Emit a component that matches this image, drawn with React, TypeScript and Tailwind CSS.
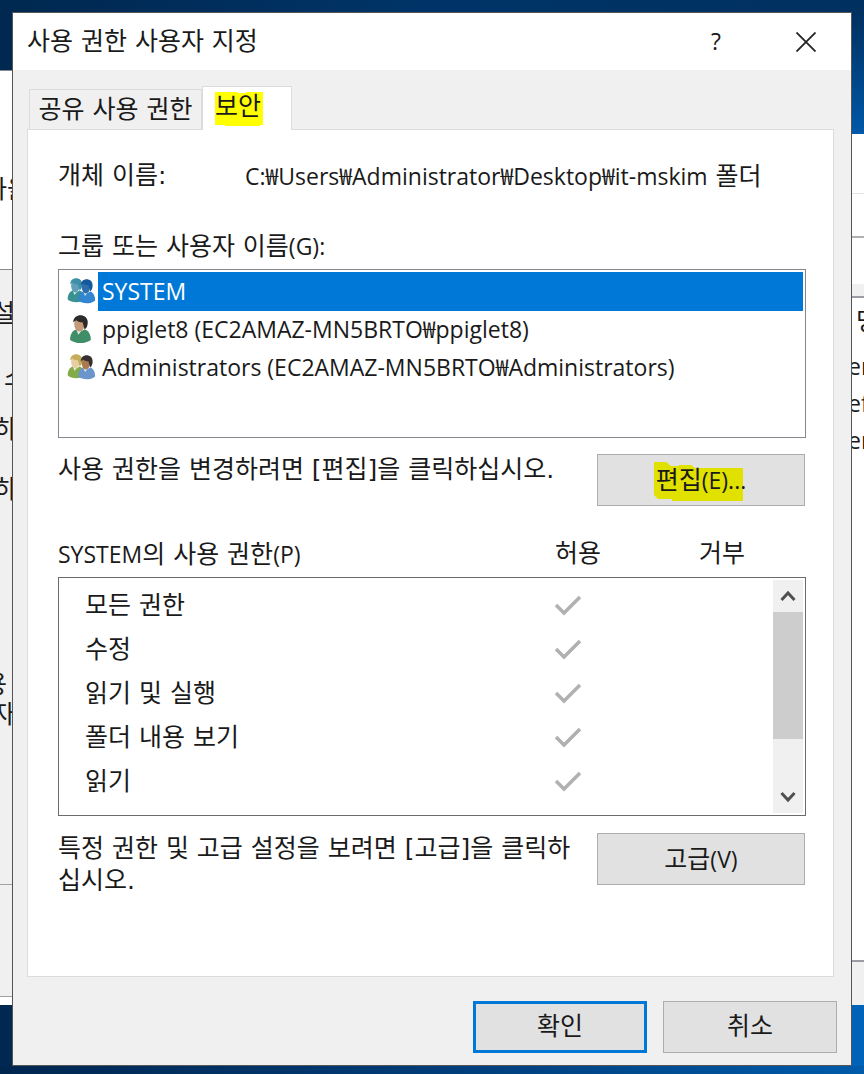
import React from 'react';

const groups = [
  { name: 'SYSTEM', icon: 'system', selected: true },
  { name: 'ppiglet8 (EC2AMAZ-MN5BRTO₩ppiglet8)', icon: 'user', selected: false },
  { name: 'Administrators (EC2AMAZ-MN5BRTO₩Administrators)', icon: 'admins', selected: false },
];

const permissions = ['모든 권한', '수정', '읽기 및 실행', '폴더 내용 보기', '읽기'];

interface PersonProps {
  hair: string;
  skin: string;
  shirt: string;
}

const Person: React.FC<PersonProps> = ({ hair, skin, shirt }) => (
  <g>
    <path d="M2 24c0-5 2-9 6-10l4 2 4-2c4 1 6 5 6 10-5 4-15 4-20 0z" fill={shirt} />
    <path d="M8 14l2 5 3-4z" fill="#e6eeee" />
    <ellipse cx="11" cy="9" rx="5" ry="7" fill={skin} />
    <path d="M5 7c0-9 14-9 14 0 0 3-1 6-3 7l-2-7c-3 0-5-1-6-2-1 1-2 1-3 2z" fill={hair} />
  </g>
);

const PrincipalIcon: React.FC<{ kind: string }> = ({ kind }) => {
  if (kind === 'user') {
    return (
      <svg className="h-7 w-7" viewBox="-1 0 27 27">
        <Person hair="#2d2a28" skin="#c49a78" shirt="#3f8e68" />
      </svg>
    );
  }
  const system = kind === 'system';
  return (
    <svg className="h-7 w-7" viewBox="0 0 28 28">
      <g transform="translate(-1 1) scale(.85 .9)">
        <Person
          hair={system ? '#3d8fa8' : '#c6ad5a'}
          skin={system ? '#5f9fba' : '#e6cfa4'}
          shirt={system ? '#3a9191' : '#83ab48'}
        />
      </g>
      <g transform="translate(9.500 2) scale(.85 .9)">
        <Person
          hair={system ? '#155a9c' : '#35302f'}
          skin={system ? '#2c6fab' : '#a9794f'}
          shirt={system ? '#3286cf' : '#6c96cb'}
        />
      </g>
    </svg>
  );
};

const Check = () => (
  <svg className="h-6 w-7" viewBox="0 0 28 24" fill="none" stroke="#b0b0b0" strokeWidth="3.5">
    <path d="M2 11l8 8L26 3" />
  </svg>
);

const Arrow: React.FC<{ d: string }> = ({ d }) => (
  <svg className="h-4 w-4" viewBox="0 0 16 16" fill="none" stroke="#505050" strokeWidth="3">
    <path d={d} />
  </svg>
);

const Latin: React.FC<{ children: React.ReactNode }> = ({ children }) => (
  <span className="font-['Open_Sans','Noto_Sans_CJK_KR',sans-serif] text-[23px]">{children}</span>
);

const App: React.FC = () => (
  <div className="flex min-h-screen flex-col bg-linear-to-r from-[#002850] via-[#003468] to-[#003060] font-['DejaVu_Sans','Noto_Sans_CJK_KR',sans-serif] text-[25px] leading-8 text-[#1a1a1a]">
    <div className="h-3" />
    <div className="flex flex-1">
      {/* Window showing at the left edge */}
      <div className="flex w-3 shrink-0 flex-col overflow-hidden bg-[#002850] whitespace-nowrap">
        <div className="h-[58px]" />
        <div className="flex h-[200px] flex-col justify-center border-y border-[#8a8a8a] bg-white pt-10">
          <p className="-ml-4">자을</p>
        </div>
        <div className="h-[614px] bg-[#f0f0f0] pt-7">
          <p className="-ml-2 h-16">설</p>
          <p className="ml-1 h-[52px]">소</p>
          <p className="-ml-1.5 h-[60px]">하</p>
          <p className="-ml-1.5 h-[195px]">하</p>
          <p className="-ml-4 h-[30px]">용</p>
          <p className="-ml-2">자</p>
        </div>
        <div className="h-[113px] border-y border-[#a0a0a0] bg-[#f0f0f0]" />
        <div className="h-2 bg-white" />
      </div>

      <section className="flex min-w-0 flex-1 flex-col border border-[#555] bg-[#f0f0f0]">
        <header className="flex h-[57px] items-center bg-white pl-3.5">
          <h1 className="flex-1">사용 권한 사용자 지정</h1>
          <button aria-label="도움말" className="w-[90px] text-center">
            <Latin>?</Latin>
          </button>
          <button aria-label="닫기" className="flex w-[90px] justify-center">
            <svg className="h-5 w-5" viewBox="0 0 20 20" fill="none" stroke="#222" strokeWidth="1.8">
              <path d="M.5.5l19 19M19.500.5l-19 19" />
            </svg>
          </button>
        </header>

        <div className="flex flex-1 flex-col px-3.5 pt-4">
          <div role="tablist" className="flex items-end pl-0.5">
            <button role="tab" aria-selected="false" className="h-10 w-[173px] border border-b-0 border-[#dcdcdc] whitespace-nowrap">
              공유 사용 권한
            </button>
            <button role="tab" aria-selected="true" className="relative -mb-px flex h-11 w-[90px] border border-b-0 border-[#dcdcdc] bg-white pt-1 pl-3">
              <mark className="relative isolate bg-transparent text-inherit">
                <svg className="absolute top-0 left-0 -z-10 h-[35px] w-12" viewBox="0 0 48 35" fill="#ffff00">
                  <path d="M0 1h23v1h8V1h17v33h-3v1H10v-1H0z" />
                </svg>
                보안
              </mark>
            </button>
          </div>

          <div role="tabpanel" className="mr-[3px] min-h-[848px] border border-[#dcdcdc] bg-white pt-[30px] pr-[27px] pl-[30px]">
            <div className="flex">
              <span className="w-[187px]">개체 이름:</span>
              <span>
                <Latin>C:₩Users₩Administrator₩Desktop₩it-mskim</Latin> 폴더
              </span>
            </div>

            <h2 className="mt-[37px]">
              그룹 또는 사용자 이름<Latin>(G):</Latin>
            </h2>
            <ul role="listbox" aria-label="그룹 또는 사용자 이름" className="mt-1.5 h-[169px] border border-[#828790] p-0.5">
              {groups.map((group) => (
                <li key={group.name} role="option" aria-selected={group.selected} className="flex h-[38px] items-center pl-1.5">
                  <PrincipalIcon kind={group.icon} />
                  <span className={group.selected ? 'ml-[3px] flex-1 bg-[#0078d7] py-[3px] pl-1 text-white' : 'ml-[3px] flex-1 py-[3px] pl-1'}>
                    <Latin>{group.name}</Latin>
                  </span>
                </li>
              ))}
            </ul>

            <div className="mt-4 flex items-start justify-between pr-px">
              <p>사용 권한을 변경하려면 [편집]을 클릭하십시오.</p>
              <button className="h-[52px] w-[208px] shrink-0 border border-[#adadad] bg-[#e1e1e1]">
                <mark className="relative isolate bg-transparent text-inherit">
                  <svg className="absolute -top-1 -left-0.5 -z-10 h-[39px] w-[89px]" viewBox="0 0 89 39" fill="#e1e100">
                    <path d="M0 0h12l5 4h8V3h12l4 3h48v33H18v-2H4l-4-4z" />
                  </svg>
                  편집<Latin>(E)...</Latin>
                </mark>
              </button>
            </div>

            <div className="mt-8 flex">
              <h2 className="flex-1">
                <Latin>SYSTEM</Latin>의 사용 권한<Latin>(P)</Latin>
              </h2>
              <span className="w-36">허용</span>
              <span className="w-[107px]">거부</span>
            </div>
            <div className="mt-1.5 flex h-[239px] items-start border border-[#6b6b6b] p-0.5">
              <table className="mt-1 flex-1">
                <tbody>
                  {permissions.map((permission) => (
                    <tr key={permission} className="h-11">
                      <td className="p-0 pl-6">{permission}</td>
                      <td className="w-[219px] p-0">
                        <Check />
                      </td>
                    </tr>
                  ))}
                </tbody>
              </table>
              <div className="flex w-[30px] flex-col self-stretch bg-[#f0f0f0]">
                <button aria-label="위로" className="flex h-8 items-center justify-center">
                  <Arrow d="M1.500 12L8 5l6.500 7" />
                </button>
                <div className="h-[127px] bg-[#cdcdcd]" />
                <button aria-label="아래로" className="mt-auto flex h-8 items-center justify-center">
                  <Arrow d="M1.500 4L8 11l6.500-7" />
                </button>
              </div>
            </div>

            <div className="mt-[17px] flex items-start justify-between pr-px">
              <p className="w-[520px] break-all">특정 권한 및 고급 설정을 보려면 [고급]을 클릭하십시오.</p>
              <button className="h-[52px] w-[208px] shrink-0 border border-[#adadad] bg-[#e1e1e1]">
                고급<Latin>(V)</Latin>
              </button>
            </div>
          </div>

          <div className="flex justify-end gap-4 pt-6 pb-3">
            <button className="h-[52px] w-[174px] border-3 border-[#0078d7] bg-[#e1e1e1]">확인</button>
            <button className="h-[52px] w-[174px] border border-[#adadad] bg-[#e1e1e1]">취소</button>
          </div>
        </div>
      </section>

      {/* Window showing at the right edge */}
      <div className="flex w-3 shrink-0 flex-col overflow-hidden bg-[#0063b8] whitespace-nowrap">
        <div className="h-[122px] bg-linear-to-b from-[#003060] to-[#0058a8]" />
        <div className="h-[60px] border-b border-[#e5e5e5] bg-white" />
        <div className="h-11 border-b-2 border-[#b0b0b0] bg-white" />
        <div className="h-[46px] bg-white" />
        <div className="h-3 bg-[#f0f0f0]" />
        <div className="h-[666px] border-y-2 border-[#9a9da5] bg-white pt-2">
          <p className="ml-1 h-[44px]">명</p>
          <p className="-ml-1 h-[37px]"><Latin>en</Latin></p>
          <p className="-ml-1 h-[37px]"><Latin>ef</Latin></p>
          <p className="-ml-1"><Latin>en</Latin></p>
        </div>
        <div className="h-[43px] bg-[#f0f0f0]" />
      </div>
    </div>
    <div className="h-[9px] bg-linear-to-r from-[#00264f] via-[#003c78] to-[#005baa]" />
  </div>
);

export default App;
